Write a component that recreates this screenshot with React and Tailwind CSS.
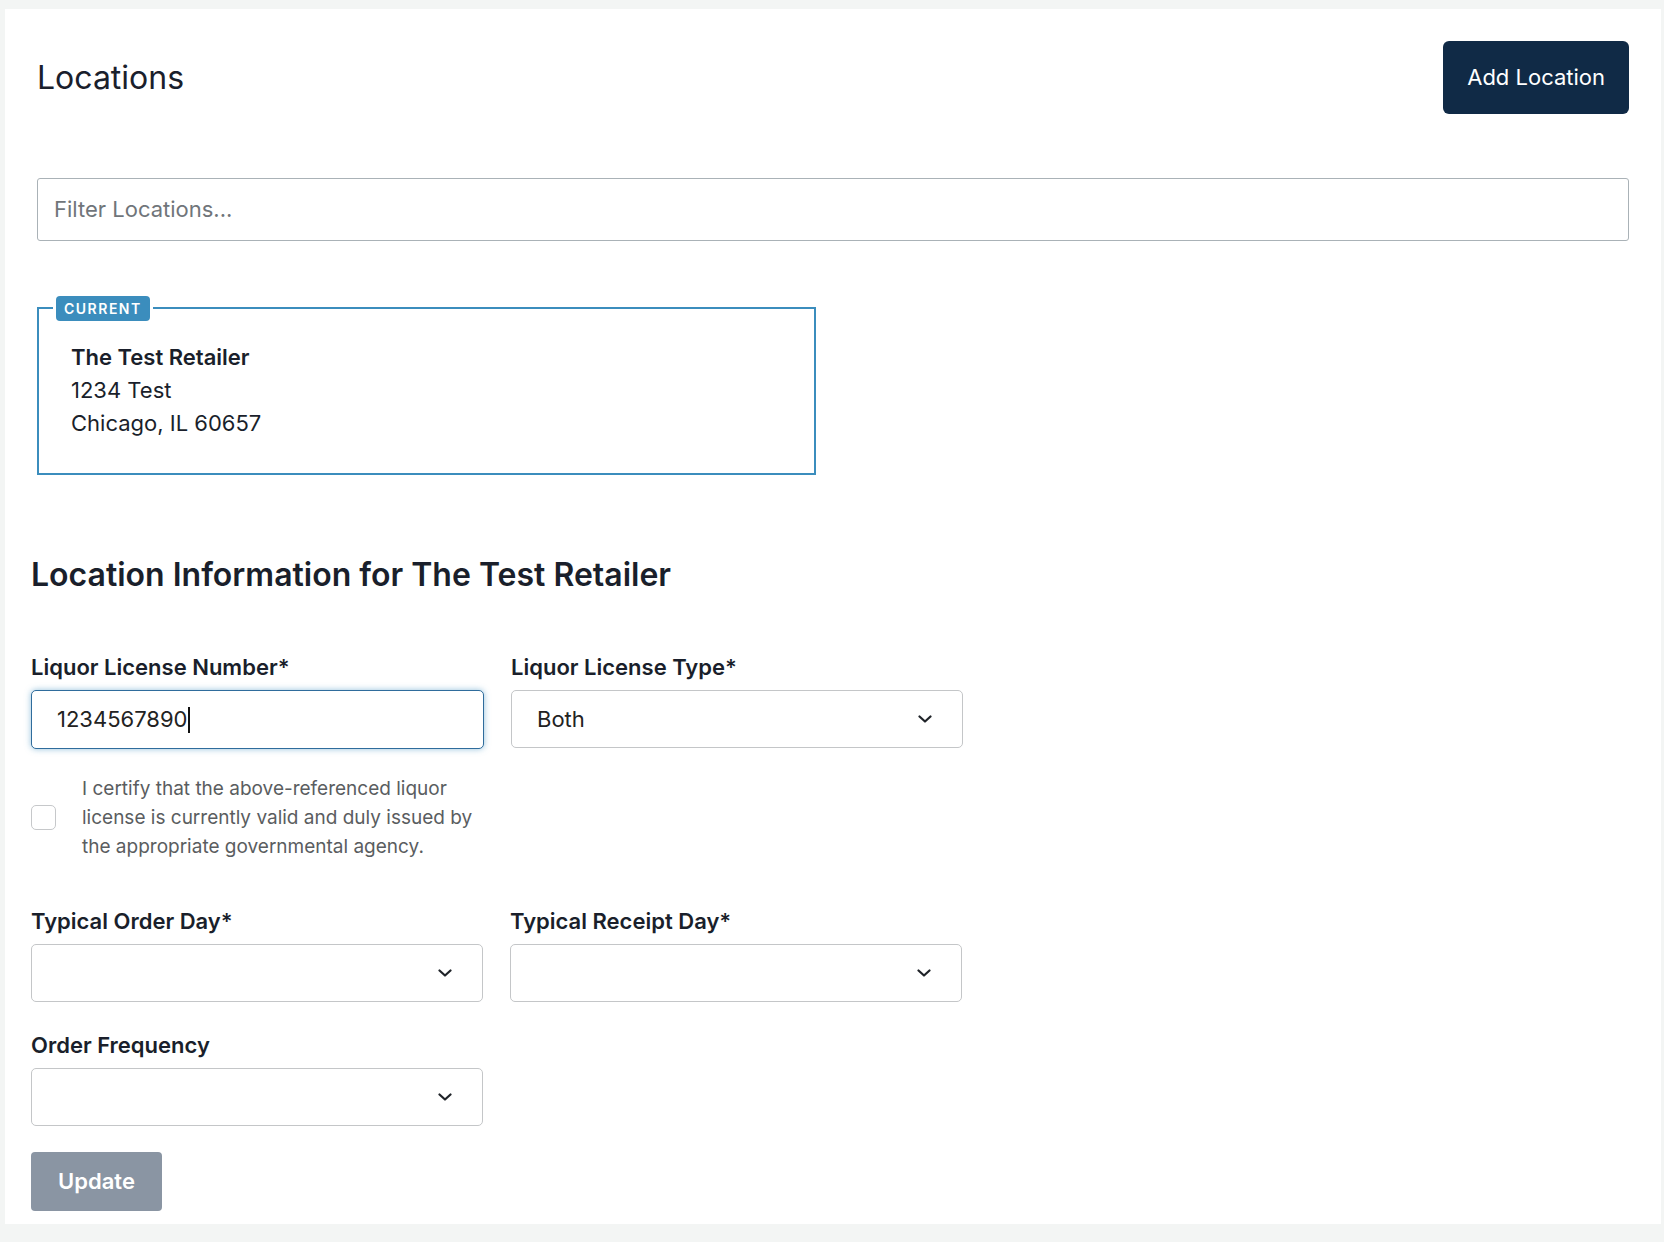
import React from "react";

const Chevron = () => (
  <svg width="14" height="8" viewBox="0 0 14 8" fill="none" className="shrink-0">
    <path d="M1.5 1.5L7 6.5L12.5 1.5" stroke="#1f2328" strokeWidth="2.2" strokeLinecap="round" strokeLinejoin="round" />
  </svg>
);

const SelectBox = ({ value }) => (
  <div className="flex h-[58px] w-[452px] items-center justify-between rounded-[5px] border border-[#c4c6c8] bg-white pl-[25px] pr-[30px] text-[22px] text-[#222]">
    <span>{value}</span>
    <Chevron />
  </div>
);

const Label = ({ children }) => (
  <div className="mb-[9px] text-[22px] font-semibold leading-7 text-[#1a1f2b]">{children}</div>
);

const App = () => {
  return (
    <div className="min-h-screen bg-[#f3f5f4] pl-[5px] pr-[3px] pt-[9px] pb-[18px] font-['Inter',sans-serif]">
      <div className="h-[1215px] bg-white">
        {/* header + filter + current location */}
        <div className="px-8 pt-8">
          <div className="flex items-center justify-between">
            <h1 className="text-[32px] font-normal text-[#1a202c]">Locations</h1>
            <button className="h-[73px] rounded-md bg-[#102a46] px-6 text-[22px] text-white">Add Location</button>
          </div>

          <div className="mt-16 flex h-[63px] items-center rounded-[3px] border border-[#aab2b7] px-4 text-[22px] text-[#70757a]">
            Filter Locations...
          </div>

          <div className="relative mt-[66px] w-[779px] border-2 border-[#3b8dbd] px-8 pt-8 pb-[33px] text-[22px] leading-[33px] text-[#1a1f2b]">
            <span className="absolute left-[17px] top-[-13px] flex h-[25px] items-center rounded-[4px] bg-[#3b8dbd] px-2 text-[14px] font-semibold tracking-[1.5px] text-white ring-[3px] ring-white">
              CURRENT
            </span>
            <div className="font-semibold">The Test Retailer</div>
            <div>1234 Test</div>
            <div>Chicago, IL 60657</div>
          </div>
        </div>

        {/* location information form */}
        <div className="px-[26px]">
          <h2 className="mt-[82px] text-[32px] font-semibold leading-9 text-[#1a1f2b]">
            Location Information for The Test Retailer
          </h2>

          <div className="mt-[60px] flex gap-[27px]">
            <div>
              <Label>Liquor License Number*</Label>
              <div className="flex h-[59px] w-[453px] items-center rounded-[5px] border border-[#2f6c9c] bg-white pl-[25px] text-[22px] text-[#222] shadow-[0_0_6px_rgba(59,141,189,0.55)]">
                1234567890
                <span className="ml-px inline-block h-[26px] w-[2px] bg-[#111]" />
              </div>
            </div>
            <div>
              <Label>Liquor License Type*</Label>
              <SelectBox value="Both" />
            </div>
          </div>

          <div className="mt-[25px] flex items-center gap-[26px]">
            <div className="h-[25px] w-[25px] shrink-0 rounded-[5px] border border-[#c6c8ca] bg-white" />
            <p className="w-[402px] text-[19px] leading-[29px] text-[#5a5d60]">
              I certify that the above-referenced liquor license is currently valid and duly issued by the appropriate governmental agency.
            </p>
          </div>

          <div className="mt-[46px] flex gap-[27px]">
            <div>
              <Label>Typical Order Day*</Label>
              <SelectBox value="" />
            </div>
            <div>
              <Label>Typical Receipt Day*</Label>
              <SelectBox value="" />
            </div>
          </div>

          <div className="mt-[29px]">
            <Label>Order Frequency</Label>
            <SelectBox value="" />
          </div>

          <button className="mt-[26px] h-[59px] w-[131px] rounded-[4px] bg-[#8a95a3] text-[22px] font-semibold text-white">
            Update
          </button>
        </div>
      </div>
    </div>
  );
};

export default App;
